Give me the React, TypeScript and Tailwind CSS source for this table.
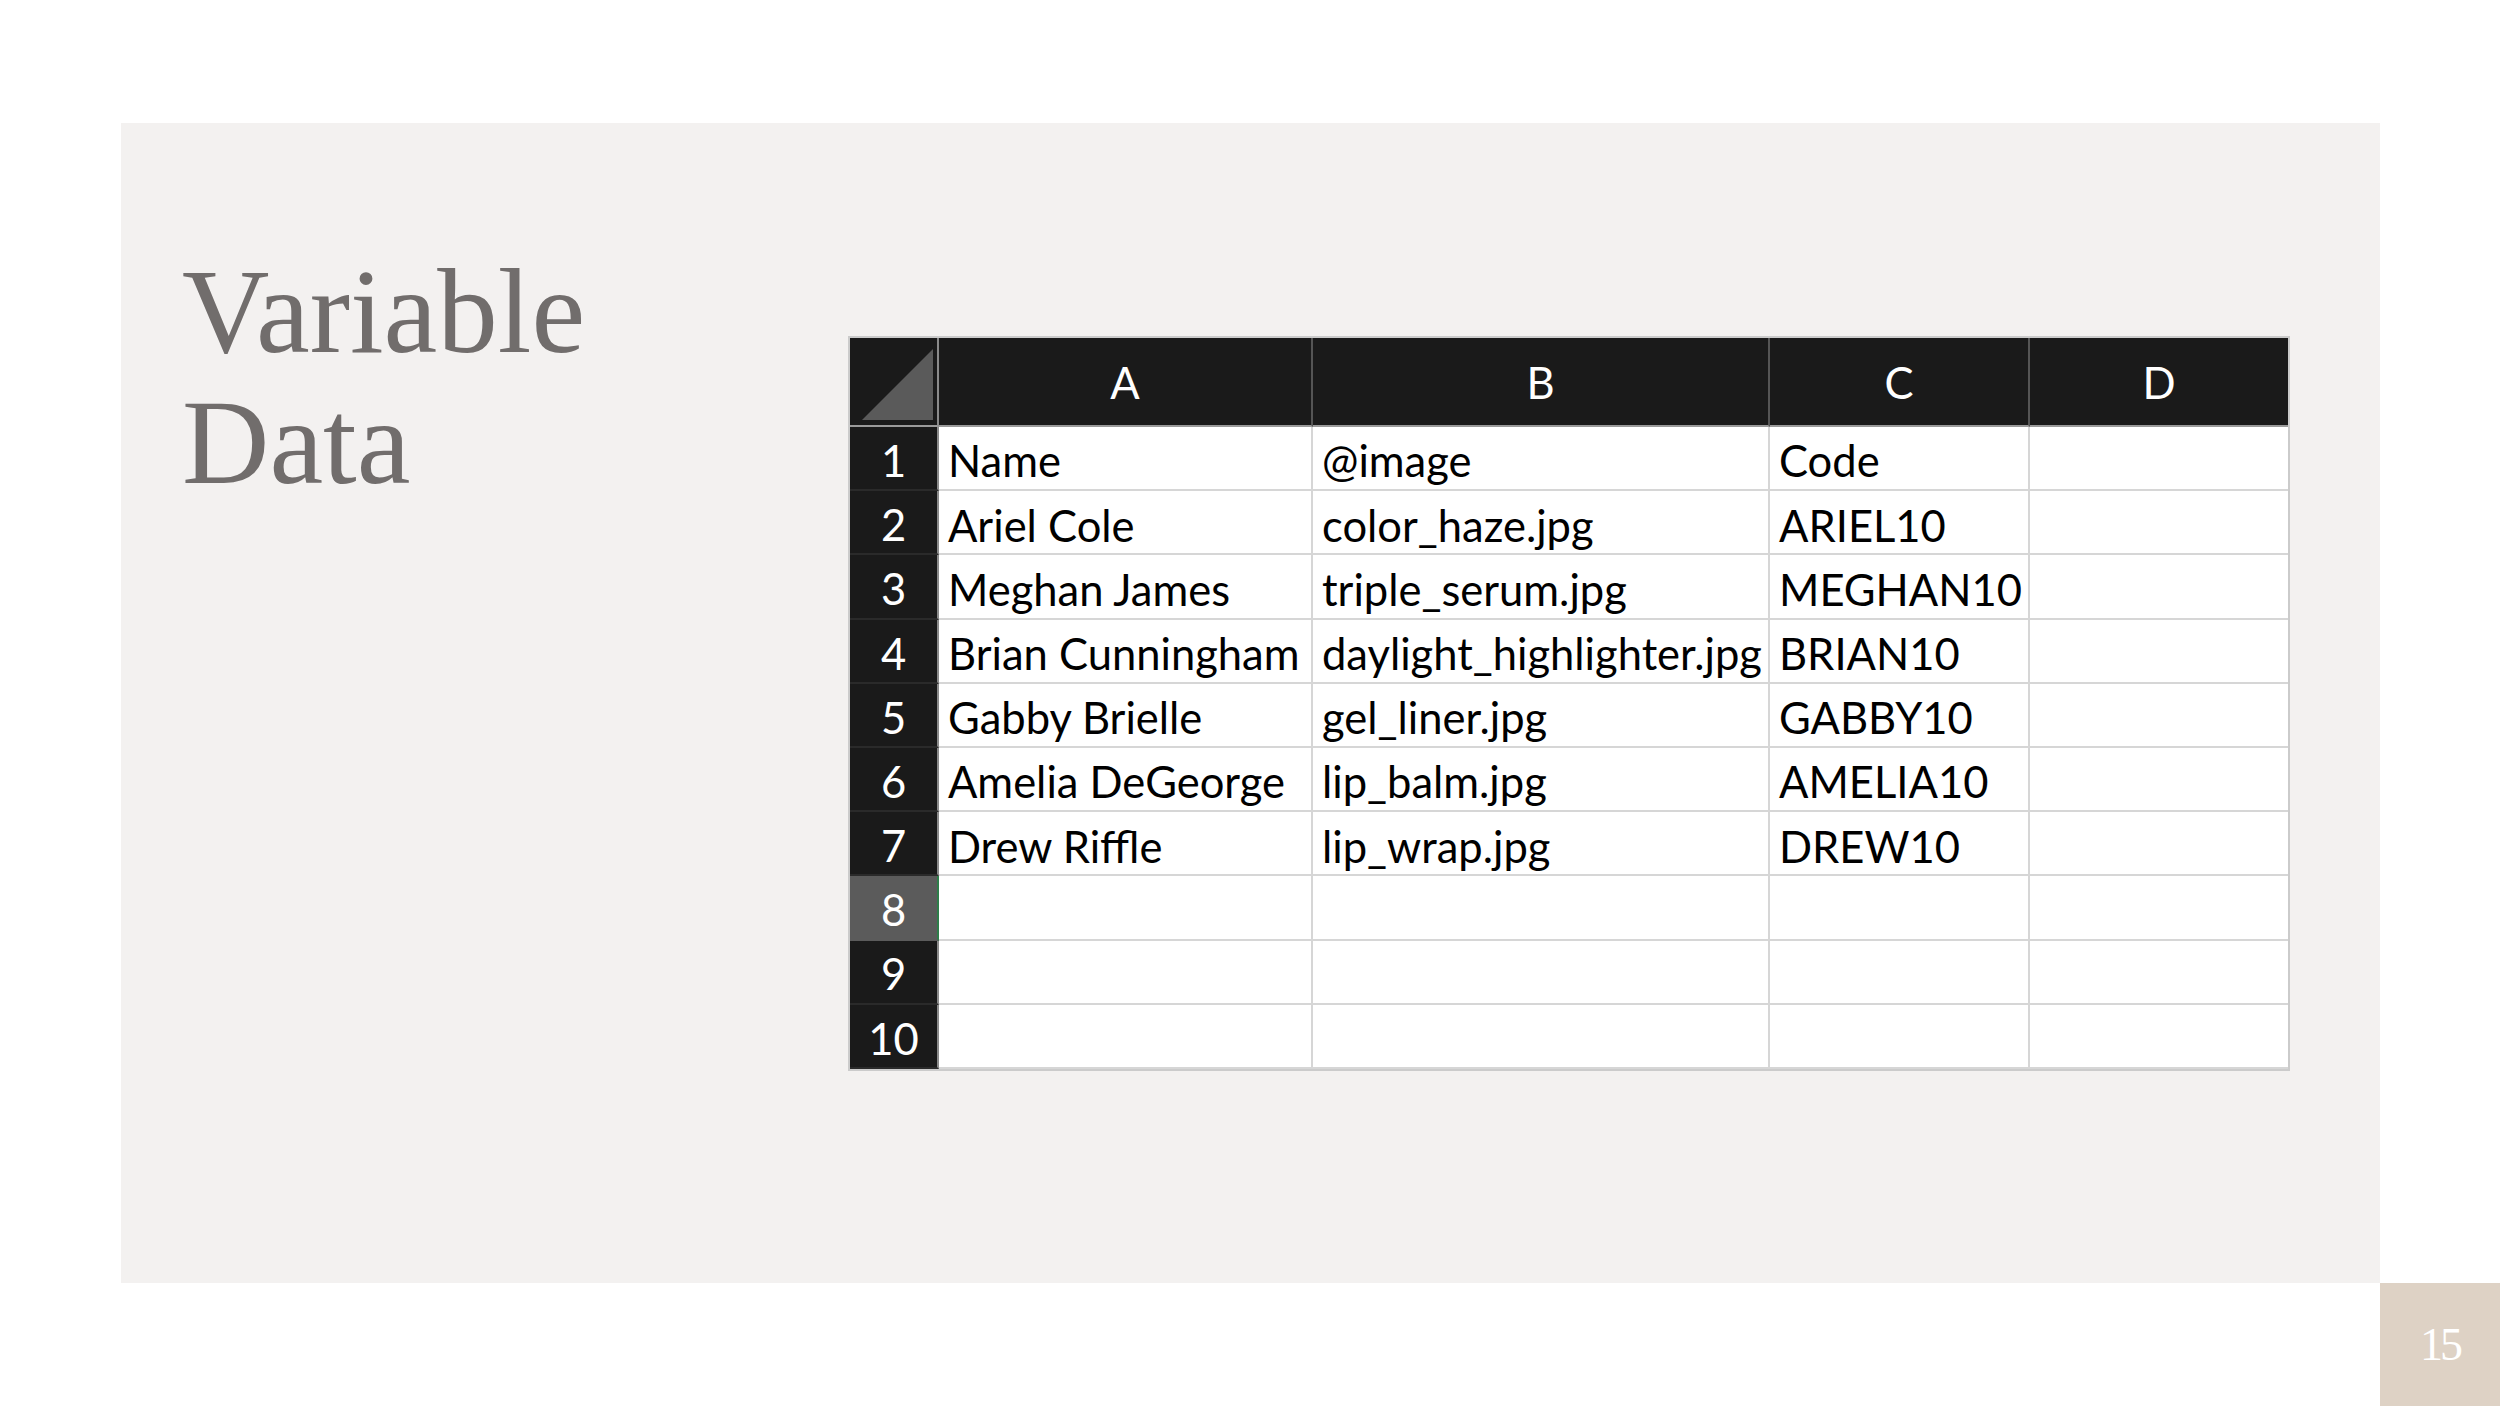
import React from "react";

const rows: [string, string, string][] = [
  ["Name", "@image", "Code"],
  ["Ariel Cole", "color_haze.jpg", "ARIEL10"],
  ["Meghan James", "triple_serum.jpg", "MEGHAN10"],
  ["Brian Cunningham", "daylight_highlighter.jpg", "BRIAN10"],
  ["Gabby Brielle", "gel_liner.jpg", "GABBY10"],
  ["Amelia DeGeorge", "lip_balm.jpg", "AMELIA10"],
  ["Drew Riffle", "lip_wrap.jpg", "DREW10"],
  ["", "", ""],
  ["", "", ""],
  ["", "", ""],
];

const cellFont = { fontFamily: "Lato, 'Open Sans', sans-serif" };

export default function App() {
  return (
    <div className="w-[2500px] h-[1406px] bg-white flex flex-col pt-[123px] overflow-hidden">
      <div className="ml-[121px] w-[2259px] h-[1160px] bg-[#f3f1f0] flex">
        <div className="w-[727px] shrink-0 pl-[61px] pt-[123px]">
          <h1
            className="text-[121px] leading-[131px] text-[#716d6c] font-normal"
            style={{ fontFamily: "'Liberation Serif', 'DejaVu Serif', serif" }}
          >
            Variable
            <br />
            Data
          </h1>
        </div>
        <div className="pt-[213px]">
          <div
            className="border-2 border-[#cbcbcb] grid grid-cols-[89px_374px_457px_260px_258px] grid-rows-[89px_repeat(10,64.2px)] text-[43.5px] text-black"
            style={cellFont}
          >
            <div className="bg-[#1a1a1a] border-r-2 border-r-[#8a8a8a] border-b-2 border-b-[#9a9a9a] relative">
              <svg className="absolute left-0 top-0" width="87" height="87" viewBox="0 0 87 87">
                <polygon points="12,82 83,11 83,82" fill="#5a5a5a" />
              </svg>
            </div>
            {["A", "B", "C", "D"].map((l, i) => (
              <div
                key={l}
                className={
                  "bg-[#1a1a1a] border-b-2 border-b-[#9a9a9a] flex items-center justify-center text-white pt-[3px] " +
                  (i < 3 ? "border-r-2 border-r-[#555555]" : "")
                }
              >
                {l}
              </div>
            ))}
            {rows.map((r, ri) => (
              <React.Fragment key={ri}>
                <div
                  className={
                    "flex items-center justify-center text-white border-b-2 pt-[5px] " +
                    (ri === 7
                      ? "bg-[#5b5b5b] border-r-2 border-r-[#2e7d4a] border-b-[#5b5b5b]"
                      : "bg-[#1a1a1a] border-r-2 border-r-[#8a8a8a] border-b-[#2a2a2a]")
                  }
                >
                  {ri + 1}
                </div>
                {r.map((c, ci) => (
                  <div
                    key={ci}
                    className="bg-white flex items-center pl-[9px] pt-[6px] whitespace-nowrap overflow-visible border-b-2 border-b-[#d6d6d6] border-r-2 border-r-[#d6d6d6]"
                  >
                    {c}
                  </div>
                ))}
                <div className="bg-white border-b-2 border-b-[#d6d6d6]" />
              </React.Fragment>
            ))}
          </div>
        </div>
      </div>
      <div className="flex justify-end">
        <div
          className="w-[120px] h-[123px] bg-[#ded2c5] flex items-center justify-center text-white text-[46px] tracking-[-3px]"
          style={{ fontFamily: "'Liberation Serif', serif" }}
        >
          15
        </div>
      </div>
    </div>
  );
}
